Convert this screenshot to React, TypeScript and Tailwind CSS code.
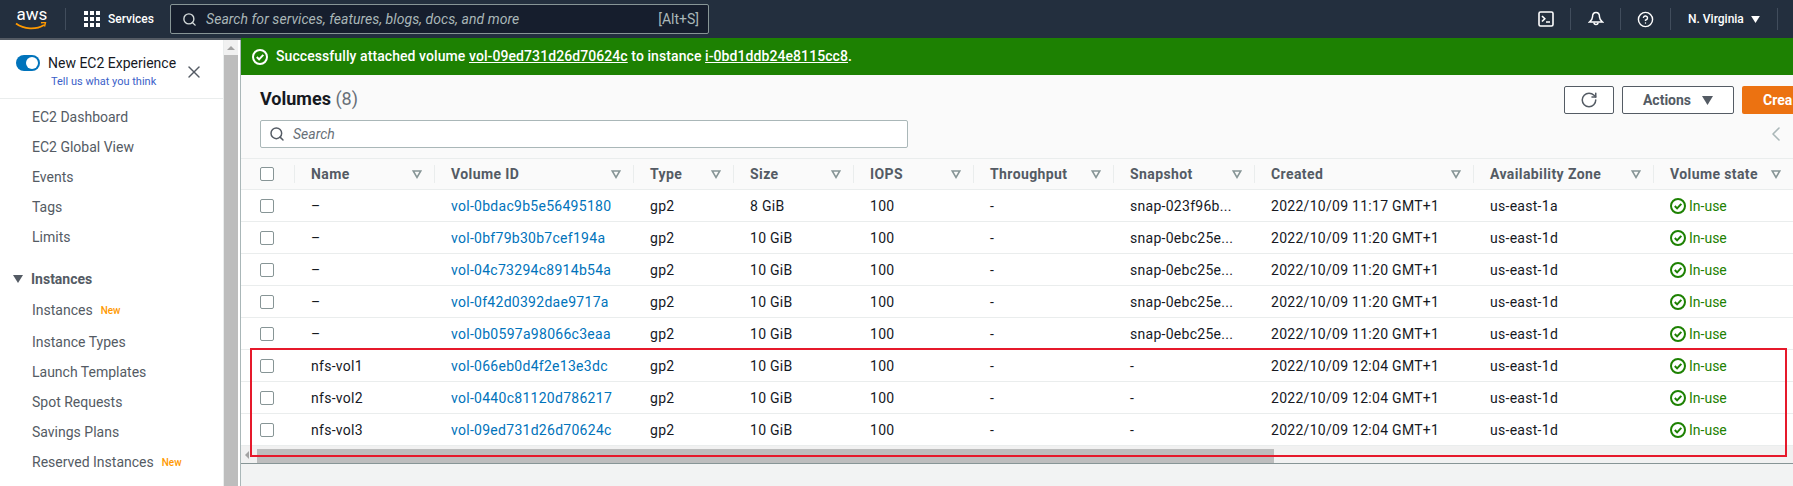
import { Search, RotateCw, X, CircleHelp, ChevronLeft } from 'lucide-react'

const FONT = "font-['Roboto','Liberation_Sans',sans-serif]"

const columns = [
  { label: 'Name', width: 'w-[140px]' },
  { label: 'Volume ID', width: 'w-[199px]' },
  { label: 'Type', width: 'w-[100px]' },
  { label: 'Size', width: 'w-[120px]' },
  { label: 'IOPS', width: 'w-[120px]' },
  { label: 'Throughput', width: 'w-[140px]' },
  { label: 'Snapshot', width: 'w-[141px]' },
  { label: 'Created', width: 'w-[219px]' },
  { label: 'Availability Zone', width: 'w-[180px]' },
  { label: 'Volume state', width: 'w-[140px]' },
]

const volumes = [
  { name: '–', id: 'vol-0bdac9b5e56495180', size: '8 GiB', snap: 'snap-023f96b...', created: '2022/10/09 11:17 GMT+1', zone: 'us-east-1a' },
  { name: '–', id: 'vol-0bf79b30b7cef194a', size: '10 GiB', snap: 'snap-0ebc25e...', created: '2022/10/09 11:20 GMT+1', zone: 'us-east-1d' },
  { name: '–', id: 'vol-04c73294c8914b54a', size: '10 GiB', snap: 'snap-0ebc25e...', created: '2022/10/09 11:20 GMT+1', zone: 'us-east-1d' },
  { name: '–', id: 'vol-0f42d0392dae9717a', size: '10 GiB', snap: 'snap-0ebc25e...', created: '2022/10/09 11:20 GMT+1', zone: 'us-east-1d' },
  { name: '–', id: 'vol-0b0597a98066c3eaa', size: '10 GiB', snap: 'snap-0ebc25e...', created: '2022/10/09 11:20 GMT+1', zone: 'us-east-1d' },
  { name: 'nfs-vol1', id: 'vol-066eb0d4f2e13e3dc', size: '10 GiB', snap: '-', created: '2022/10/09 12:04 GMT+1', zone: 'us-east-1d' },
  { name: 'nfs-vol2', id: 'vol-0440c81120d786217', size: '10 GiB', snap: '-', created: '2022/10/09 12:04 GMT+1', zone: 'us-east-1d' },
  { name: 'nfs-vol3', id: 'vol-09ed731d26d70624c', size: '10 GiB', snap: '-', created: '2022/10/09 12:04 GMT+1', zone: 'us-east-1d' },
]

function CheckCircle({ className }: { className?: string }) {
  return (
    <svg viewBox="0 0 16 16" fill="none" stroke="currentColor" strokeWidth="2" className={className}>
      <circle cx="8" cy="8" r="7" />
      <path d="M4.8 8l2.3 2.4 4.2-4.6" />
    </svg>
  )
}

function Caret({ className }: { className?: string }) {
  return (
    <svg viewBox="0 0 10 8" fill="currentColor" className={className}>
      <path d="M0 0h10L5 8z" />
    </svg>
  )
}

function SortIcon() {
  return (
    <svg viewBox="0 0 10 9" fill="none" stroke="#879596" strokeWidth="1.6" className="w-[10px] h-[9px] shrink-0">
      <path d="M1.2 1h7.6L5 7.4z" />
    </svg>
  )
}

function Checkbox() {
  return <div className="w-[14px] h-[14px] rounded-[2px] border border-[#879596] bg-white" />
}

function TopNav() {
  return (
    <div className="h-[40px] shrink-0 bg-[#232f3e] border-b-2 border-[#545b64] flex items-center text-white">
      <div className="w-[66px] h-[22px] border-r border-[#414d5c] flex justify-center">
        <div className="relative w-[34px] h-[22px] -ml-[1px]">
          <span className={`${FONT} block text-[17px] leading-[17px] font-normal text-center -mt-[2px]`}>aws</span>
          <svg viewBox="0 0 32 9" className="absolute left-0 top-[14px] w-[32px] h-[9px]" fill="none">
            <path d="M1 1.5c8 6 20 6.5 28 1.5" stroke="#ff9900" strokeWidth="1.8" />
            <path d="M26 .8l4.5-.5-1 4.2" stroke="#ff9900" strokeWidth="1.5" />
          </svg>
        </div>
      </div>
      <div className="ml-[18px] grid grid-cols-3 gap-[2px] w-[16px]">
        {Array.from({ length: 9 }).map((_, i) => (
          <div key={i} className="w-[4px] h-[4px] bg-white" />
        ))}
      </div>
      <span className="ml-[8px] w-[62px] text-[12px] font-medium">Services</span>
      <div className="w-[539px] h-[30px] bg-[#161e2d] border border-[#879596] rounded-[2px] flex items-center pl-[11px] pr-[9px]">
        <Search className="w-[15px] h-[15px] text-[#d5dbdb]" strokeWidth={2.2} />
        <span className="ml-[9px] flex-1 text-[14px] tracking-[0.06px] italic text-[#aab7b8]">Search for services, features, blogs, docs, and more</span>
        <span className="text-[14px] text-[#aab7b8]">[Alt+S]</span>
      </div>
      <div className="ml-auto flex items-center">
        <NavIcon>
          <svg viewBox="0 0 16 16" className="w-[16px] h-[16px]" fill="none" stroke="white" strokeWidth="1.6">
            <rect x="1" y="1" width="14" height="14" rx="1.5" />
            <path d="M4 5l2.8 2.8L4 10.5M8 11h4" />
          </svg>
        </NavIcon>
        <NavIcon>
          <svg viewBox="0 0 16 16" className="w-[16px] h-[16px]" fill="none" stroke="white" strokeWidth="1.5">
            <path d="M8 1.5c2.7 0 3.5 2.3 3.5 4.5 0 2 1.5 3.7 3 5H1.5c1.5-1.3 3-3 3-5 0-2.2.8-4.5 3.5-4.500z" />
            <path d="M6 11.5a2 2 0 0 0 4 0" />
          </svg>
        </NavIcon>
        <NavIcon>
          <CircleHelp className="w-[17px] h-[17px]" strokeWidth={2} />
        </NavIcon>
        <div className="w-[107px] h-[22px] border-r border-[#414d5c] flex items-center pl-[17px]">
          <span className="text-[12px] font-medium">N. Virginia</span>
          <Caret className="w-[9px] h-[7px] ml-[7px]" />
        </div>
        <div className="w-[15px]" />
      </div>
    </div>
  )
}

function NavIcon({ children }: { children: React.ReactNode }) {
  return <div className="w-[50px] h-[22px] border-r border-[#414d5c] flex items-center justify-center">{children}</div>
}

function SideItem({ label, isNew }: { label: string; isNew?: boolean }) {
  return (
    <div className="h-[30px] pl-[32px] flex items-center text-[14px] text-[#545b64]">
      {label}
      {isNew && <span className="ml-[8px] mt-[1px] text-[10px] font-medium text-[#ff9900]">New</span>}
    </div>
  )
}

function Sidebar() {
  return (
    <div className="w-[224px] shrink-0 bg-white border-r border-[#eaeded] flex flex-col overflow-hidden">
      <div className="h-[59px] shrink-0 border-b border-[#eaeded] flex pt-[13px] pl-[16px] relative">
        <div className="w-[24px] h-[16px] mt-[2px] rounded-full bg-[#0073bb] flex items-center justify-end pr-[2px]">
          <div className="w-[12px] h-[12px] rounded-full bg-white" />
        </div>
        <div className="ml-[8px]">
          <div className="text-[14px] leading-[20px] text-[#16191f]">New EC2 Experience</div>
          <div className="ml-[3px] mt-[2px] text-[11px] leading-[14px] text-[#3b5fc9]">Tell us what you think</div>
        </div>
        <X className="absolute left-[184px] top-[22px] w-[20px] h-[20px] text-[#545b64]" strokeWidth={1.7} />
      </div>
      <div className="pt-[3px]">
        <SideItem label="EC2 Dashboard" />
        <SideItem label="EC2 Global View" />
        <SideItem label="Events" />
        <SideItem label="Tags" />
        <SideItem label="Limits" />
      </div>
      <div className="mt-[12px] mb-[1px] h-[30px] pl-[13px] flex items-center text-[14px] font-bold text-[#545b64]">
        <Caret className="w-[10px] h-[8px] mr-[8px]" />
        Instances
      </div>
      <SideItem label="Instances" isNew />
      <div className="h-[2px]" />
      <SideItem label="Instance Types" />
      <SideItem label="Launch Templates" />
      <SideItem label="Spot Requests" />
      <SideItem label="Savings Plans" />
      <SideItem label="Reserved Instances" isNew />
    </div>
  )
}

function VolumesTable() {
  return (
    <table className="table-fixed border-collapse w-[1552px] text-[14px] tracking-[0.28px]">
      <thead>
        <tr className="h-[31px] bg-[#fafafa] border-y border-[#eaeded]">
          <th className="w-[53px] pl-[19px] font-normal">
            <Checkbox />
          </th>
          {columns.map((c) => (
            <th key={c.label} className={`${c.width} p-0 font-normal`}>
              <div className="h-[18px] border-l border-[#eaeded] pl-[16px] pr-[12px] flex items-center justify-between">
                <span className="font-bold tracking-[0.4px] text-[#545b64] whitespace-nowrap">{c.label}</span>
                <SortIcon />
              </div>
            </th>
          ))}
        </tr>
      </thead>
      <tbody className="bg-white text-[#16191f]">
        {volumes.map((v) => (
          <tr key={v.id} className="h-[32px] border-b border-[#eaeded]">
            <td className="pl-[19px]">
              <Checkbox />
            </td>
            <td className="pl-[17px] pt-[1px]">{v.name}</td>
            <td className="pl-[17px] pt-[1px] text-[#0073bb]">{v.id}</td>
            <td className="pl-[17px] pt-[1px]">gp2</td>
            <td className="pl-[17px] pt-[1px]">{v.size}</td>
            <td className="pl-[17px] pt-[1px]">100</td>
            <td className="pl-[17px] pt-[1px]">-</td>
            <td className="pl-[17px] pt-[1px] whitespace-nowrap">{v.snap}</td>
            <td className="pl-[17px] pt-[1px] whitespace-nowrap">{v.created}</td>
            <td className="pl-[17px] pt-[1px]">{v.zone}</td>
            <td className="pl-[17px] pt-[1px]">
              <div className="flex items-center gap-[3px] text-[#1d8102] tracking-normal">
                <CheckCircle className="w-[16px] h-[16px]" />
                In-use
              </div>
            </td>
          </tr>
        ))}
      </tbody>
    </table>
  )
}

export default function App() {
  return (
    <div className={`${FONT} relative w-[1793px] h-[486px] overflow-hidden flex flex-col bg-white`}>
      <TopNav />
      <div className="flex-1 flex min-h-0">
        <Sidebar />
        {/* page scrollbar */}
        <div className="w-[14px] shrink-0 bg-[#f1f1f1] flex flex-col">
          <div className="h-[15px] flex items-center justify-center">
            <div className="w-0 h-0 border-x-[4px] border-x-transparent border-b-[4px] border-b-[#a3a3a3]" />
          </div>
          <div className="flex-1 bg-[#bdbdbd]" />
        </div>
        <div className="w-[2px] shrink-0 bg-white" />
        <div className="flex-1 min-w-0 flex flex-col bg-[#f2f3f3] border-l border-[#aab7b8]">
          <div className="h-[37px] shrink-0 -mt-[2px] bg-[#1d8102] flex items-center pl-[11px] text-white text-[14px] tracking-[0.08px] font-medium">
            <CheckCircle className="w-[16px] h-[16px] mr-[8px]" />
            <span>
              Successfully attached volume <span className="underline">vol-09ed731d26d70624c</span> to instance{' '}
              <span className="underline">i-0bd1ddb24e8115cc8</span>.
            </span>
          </div>
          <div className="h-[83px] shrink-0 bg-[#fafafa] pl-[19px] pt-[11px] relative overflow-hidden">
            <div className="flex items-start h-[28px]">
              <h1 className="mt-[2px] text-[18px] leading-[22px] font-bold text-[#16191f]">
                Volumes <span className="font-normal text-[#687078]">(8)</span>
              </h1>
              <div className="ml-auto flex gap-[8px] w-[229px] shrink-0">
                <button className="w-[50px] h-[28px] shrink-0 bg-white border border-[#545b64] rounded-[2px] flex items-center justify-center">
                  <RotateCw className="w-[18px] h-[18px] text-[#545b64]" strokeWidth={2} />
                </button>
                <button className="w-[112px] h-[28px] shrink-0 bg-white border border-[#545b64] rounded-[2px] flex items-center justify-center text-[14px] font-bold text-[#545b64]">
                  Actions
                  <Caret className="w-[11px] h-[9px] ml-[11px]" />
                </button>
                <div className="w-[51px] h-[28px] shrink-0 bg-[#ec7211] rounded-l-[2px] pl-[21px] text-[14px] leading-[28px] font-bold text-white overflow-hidden whitespace-nowrap">
                  Crea
                </div>
              </div>
            </div>
            <div className="mt-[6px] flex items-center">
              <div className="w-[648px] h-[28px] bg-white border border-[#aab7b8] rounded-[2px] flex items-center pl-[8px]">
                <Search className="w-[16px] h-[16px] text-[#545b64]" strokeWidth={2.2} />
                <span className="ml-[8px] text-[14px] italic text-[#687078]">Search</span>
              </div>
              <ChevronLeft className="ml-auto mr-[5px] w-[24px] h-[24px] text-[#aab7b8]" strokeWidth={1.6} />
            </div>
          </div>
          <div className="overflow-hidden shrink-0">
            <VolumesTable />
          </div>
          <div className="h-[18px] shrink-0 bg-[#f1f1f1] border-b border-[#879596] flex items-center">
            <div className="ml-[4px] w-0 h-0 border-y-[4px] border-y-transparent border-r-[4px] border-r-[#a3a3a3]" />
            <div className="ml-[8px] w-[1017px] h-[14px] mt-[2px] bg-[#bdbdbd]" />
          </div>
        </div>
      </div>
      {/* annotation drawn over the screenshot */}
      <div className="absolute left-[250px] top-[348px] w-[1537px] h-[109px] border-2 border-[#e6192b]" />
    </div>
  )
}
